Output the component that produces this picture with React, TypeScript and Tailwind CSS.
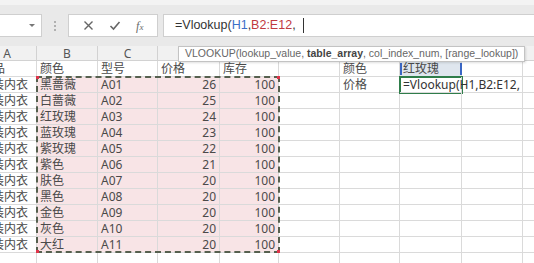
import React from 'react';

const cols = [59, 61, 60, 62, 59, 61, 60, 62, 61, 61];
const letters = ['A', 'B', 'C', 'D', 'E', 'F', 'G', 'H', 'I', 'J'];
const template = cols.map((w) => `${w}px`).join(' ');

const rows = [
  ['黑蔷薇', 'A01', '26'],
  ['白蔷薇', 'A02', '25'],
  ['红玫瑰', 'A03', '24'],
  ['蓝玫瑰', 'A04', '23'],
  ['紫玫瑰', 'A05', '22'],
  ['紫色', 'A06', '21'],
  ['肤色', 'A07', '20'],
  ['黑色', 'A08', '20'],
  ['金色', 'A09', '20'],
  ['灰色', 'A10', '20'],
  ['大红', 'A11', '20'],
];

const font = { fontFamily: '"Noto Sans", "Noto Sans CJK SC", sans-serif' };

const Cell = ({ children, right, pink }: { children?: React.ReactNode; right?: boolean; pink?: boolean }) => (
  <div
    className={`h-4 border-r border-b border-[#dadada] px-[3px] text-[12px] leading-[15px] text-[#4a4a4a] whitespace-nowrap overflow-hidden ${right ? 'text-right' : ''} ${pink ? 'bg-[#f8e4e6]' : 'bg-white'}`}
  >
    {children}
  </div>
);

export default function App() {
  return (
    <div className="w-[534px] h-[263px] overflow-hidden bg-white relative" style={font}>
      {/* formula bar */}
      <div className="h-[46px] bg-[#e9e9e9] border-t-[5px] border-[#f3f3f3] flex items-start pt-[9px]">
        <div className="w-[42px] h-[23px] bg-white border border-[#cfcfcf] border-l-0 flex items-center justify-end pr-[6px]">
          <div className="w-0 h-0 border-l-[3px] border-r-[3px] border-t-[3px] border-l-transparent border-r-transparent border-t-[#777]" />
        </div>
        <div className="w-[26px] h-[23px] flex flex-col items-center justify-center gap-[2px]">
          <div className="w-[2px] h-[2px] bg-[#b0b0b0]" />
          <div className="w-[2px] h-[2px] bg-[#b0b0b0]" />
          <div className="w-[2px] h-[2px] bg-[#b0b0b0]" />
        </div>
        <div className="w-[90px] h-[23px] bg-white border border-[#cfcfcf] flex items-center justify-around px-[6px] text-[#6a6a6a]">
          <svg width="11" height="11" viewBox="0 0 11 11">
            <path d="M1.5 1.5 L9.5 9.5 M9.5 1.5 L1.5 9.5" stroke="#666" strokeWidth="1.4" />
          </svg>
          <svg width="12" height="11" viewBox="0 0 12 11">
            <path d="M1.5 6 L4.5 9 L10.5 2" stroke="#666" strokeWidth="1.6" fill="none" />
          </svg>
          <span className="italic text-[12px] leading-none" style={{ fontFamily: '"Liberation Serif", serif' }}>
            f<span className="text-[9px]">x</span>
          </span>
        </div>
        <div
          className="ml-[5px] flex-1 h-[23px] bg-white border border-[#cfcfcf] border-r-0 flex items-center pl-[11px] text-[12.5px] text-[#333]"
          style={{ fontFamily: '"Liberation Sans", sans-serif' }}
        >
          <span>=Vlookup(</span>
          <span className="text-[#3b6fc8]">H1</span>
          <span>,</span>
          <span className="text-[#c0393f]">B2:E12</span>
          <span>,</span>
          <span className="ml-[7px] w-px h-[15px] bg-[#333]" />
        </div>
      </div>

      {/* sheet */}
      <div className="ml-[-22px] grid" style={{ gridTemplateColumns: template }}>
        {letters.map((l) => (
          <div key={l} className="h-[15px] bg-[#f1f1f1] border-r border-b border-[#d2d2d2] text-center text-[12px] leading-[15px] text-[#555]">
            {l}
          </div>
        ))}

        <div className="h-4 border-r border-b border-[#dadada] text-[12px] leading-[15px] text-[#4a4a4a] whitespace-nowrap overflow-hidden pl-[3px]">商品</div>
        <Cell>颜色</Cell>
        <Cell>型号</Cell>
        <Cell>价格</Cell>
        <Cell>库存</Cell>
        <Cell />
        <Cell>颜色</Cell>
        <div className="h-4 border-r border-b border-[#dadada] bg-[#dfe6ee] px-[3px] text-[12px] leading-[15px] text-[#4a4a4a]">红玫瑰</div>
        <Cell />
        <Cell />

        {rows.map((r, i) => (
          <React.Fragment key={r[1]}>
            <div className="h-4 border-r border-b border-[#dadada] text-[12px] leading-[15px] text-[#4a4a4a] whitespace-nowrap overflow-hidden pl-[2px]">女装内衣</div>
            <Cell pink>{r[0]}</Cell>
            <Cell pink>{r[1]}</Cell>
            <Cell pink right>{r[2]}</Cell>
            <Cell pink right>100</Cell>
            <Cell />
            <Cell>{i === 0 ? '价格' : ''}</Cell>
            <div className="h-4 border-r border-b border-[#dadada] px-[3px] text-[12px] leading-[15px] text-[#333] whitespace-nowrap overflow-visible relative z-10">
              {i === 0 ? '=Vlookup(H1,B2:E12,' : ''}
            </div>
            <Cell />
            <Cell />
          </React.Fragment>
        ))}
        {cols.map((_, i) => (
          <Cell key={'last' + i} />
        ))}
      </div>

      {/* copy marquee B2:E12 */}
      <div className="absolute left-[36px] top-[76px] w-[244px] h-[177px] border-2 border-dashed border-[#56604f] pointer-events-none">
        <div className="absolute -left-[2px] -top-[2px] w-[3px] h-[3px] bg-[#e0344a]" />
        <div className="absolute -right-[2px] -top-[2px] w-[3px] h-[3px] bg-[#e0344a]" />
        <div className="absolute -left-[2px] -bottom-[2px] w-[3px] h-[3px] bg-[#e0344a]" />
        <div className="absolute -right-[2px] -bottom-[2px] w-[3px] h-[3px] bg-[#e0344a]" />
      </div>

      {/* H1 reference marks */}
      <div className="absolute left-[400px] top-[62px] w-[62px] h-[15px] pointer-events-none">
        <div className="absolute left-0 top-[1px] w-[2px] h-[12px] bg-[#3a66c4]" />
        <div className="absolute right-0 top-[1px] w-[2px] h-[12px] bg-[#3a66c4]" />
      </div>
      {/* H2 active cell */}
      <div className="absolute left-[399px] top-[76px] w-[64px] h-[18px] border-2 border-[#2f7d4a] pointer-events-none" />

      {/* function tooltip */}
      <div
        className="absolute left-[178px] top-[46px] h-[16px] px-[6px] bg-white border border-[#c3c3c3] shadow-[1px_1px_2px_rgba(0,0,0,0.12)] flex items-center text-[10.5px] text-[#666] whitespace-nowrap z-20"
        style={{ fontFamily: '"Liberation Sans", sans-serif' }}
      >
        VLOOKUP(lookup_value,&nbsp;<span className="font-bold text-[#444]">table_array</span>, col_index_num, [range_lookup])
      </div>
    </div>
  );
}
